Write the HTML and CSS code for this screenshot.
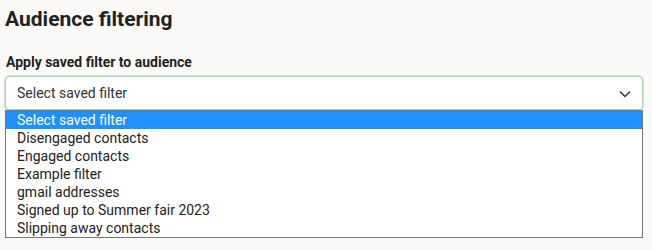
FILE: index.html
```html
<!DOCTYPE html>
<html lang="en">
<head>
    <meta charset="UTF-8">
    <meta name="viewport" content="width=device-width, initial-scale=1.0">
    <title>Audience filtering</title>
    <link rel="stylesheet" href="styles.css">
</head>
<body>
    <div class="panel">
        <h2>Audience filtering</h2>

        <!-- Filtro salvo -->
        <div class="form-group">
            <label for="saved-filter">Apply saved filter to audience</label>
            <div class="select" id="saved-filter">
                <span>Select saved filter</span>
                <svg class="chevron" width="12" height="8" viewBox="0 0 12 8">
                    <path d="M1 1.5 L6 6.5 L11 1.5" fill="none" stroke="#333" stroke-width="1.5"/>
                </svg>
            </div>
            <ul class="options">
                <li class="selected">Select saved filter</li>
                <li>Disengaged contacts</li>
                <li>Engaged contacts</li>
                <li>Example filter</li>
                <li>gmail addresses</li>
                <li>Signed up to Summer fair 2023</li>
                <li>Slipping away contacts</li>
            </ul>
        </div>
    </div>
</body>
</html>
```

FILE: styles.css
```css
body {
    font-family: Roboto, "Liberation Sans", Arial, sans-serif;
    margin: 0;
    padding: 0;
    background-color: #fbfaf9;
    color: #222;
}
.panel {
    padding: 7px 9px 0 5px;
}
h2 {
    font-size: 21px;
    font-weight: 700;
    line-height: 25px;
    margin: 0 0 21px 0;
    color: #222;
}
.form-group label {
    display: block;
    font-size: 14px;
    font-weight: 700;
    line-height: 18px;
    margin: 0 0 5px 1px;
}
.select {
    display: flex;
    align-items: center;
    justify-content: space-between;
    height: 32px;
    padding: 0 11px 0 11px;
    background: white;
    border: 1px solid #a9d4b9;
    border-radius: 4px;
    box-shadow: 0 0 0 1px #cfe6d7;
    font-size: 14px;
    color: #333;
}
.chevron {
    margin-top: 1px;
}
.options {
    list-style: none;
    margin: 0;
    padding: 0;
    background: white;
    border: 1px solid #767676;
    font-size: 14px;
    color: #222;
}
.options li {
    height: 18px;
    line-height: 18px;
    padding-left: 11px;
}
.options li.selected {
    background-color: #1e90ff;
    color: white;
}
```
